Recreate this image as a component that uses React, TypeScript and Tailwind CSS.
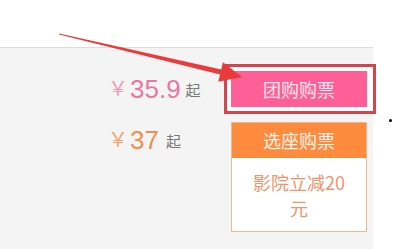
export default function App() {
  return (
    <div className="relative w-[393px] h-[249px] overflow-hidden bg-white font-['Liberation_Sans','Noto_Sans_CJK_SC',sans-serif]">
      {/* top white strip */}
      <div className="h-[47px]" />

      {/* price panel */}
      <div className="w-[373px] h-[202px] bg-[#f4f4f4] border-t border-[#dcdcdc] flex pl-[108px] pt-[23px]">
        <div className="flex-1 flex flex-col">
          <div className="h-[36px] flex items-center">
            <span className="text-[20px] text-[#f29abb] mr-[2px]">￥</span>
            <span className="text-[26px] text-[#ea77a2] leading-none">35.9</span>
            <span className="text-[15px] text-[#777] ml-[5px] mt-[3px] font-['Noto_Sans_CJK_SC',sans-serif]">起</span>
          </div>
          <div className="h-[35px] mt-[15px] flex items-center">
            <span className="text-[20px] text-[#f5a76f] mr-[2px]">￥</span>
            <span className="text-[26px] text-[#f08d4f] leading-none">37</span>
            <span className="text-[15px] text-[#777] ml-[7px] mt-[3px] font-['Noto_Sans_CJK_SC',sans-serif]">起</span>
          </div>
        </div>

        <div className="w-[136px] mr-[6px] flex flex-col font-['Noto_Sans_CJK_SC',sans-serif]">
          <div className="relative">
            {/* annotation frame */}
            <div className="absolute left-[-7px] top-[-7px] w-[152px] h-[50px] border-[3px] border-[#d4454d] bg-white" />
            <button className="relative w-full h-[36px] bg-[#ff5f97] text-[#fde6ef] text-[18px] leading-none">
              团购购票
            </button>
          </div>

          <div className="mt-[15px] h-[110px] flex flex-col border border-[#f0b987] bg-white">
            <div className="h-[35px] bg-[#fe8a3e] text-[#fff3ea] text-[18px] flex items-center justify-center">
              选座购票
            </div>
            <div className="flex-1 flex items-center justify-center text-center text-[18px] leading-[26px] text-[#f0936b] px-[4px]">
              影院立减20
              <br />
              元
            </div>
          </div>
        </div>
      </div>

      {/* dot */}
      <div className="absolute left-[389px] top-[119px] w-[3px] h-[3px] rounded-full bg-black" />

      {/* red arrow */}
      <svg className="absolute inset-0 pointer-events-none" width="393" height="249" viewBox="0 0 393 249">
        <polygon
          points="59.1,33.4 221.2,69.6 222.9,62.3 242,77 218.3,81.7 220,74.4 58.9,34.6"
          fill="#e93b3c"
        />
      </svg>
    </div>
  )
}
